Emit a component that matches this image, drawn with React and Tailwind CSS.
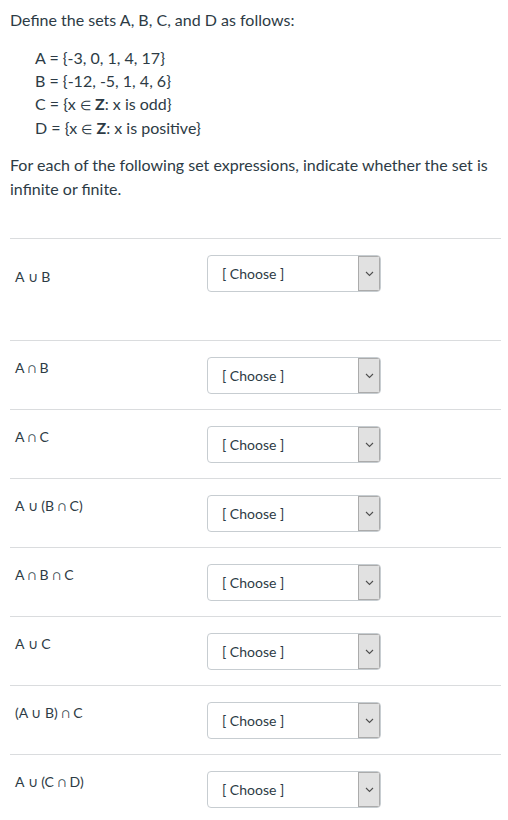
export default function App() {
  const rows = [
    "A ∪ B",
    "A ∩ B",
    "A ∩ C",
    "A ∪ (B ∩ C)",
    "A ∩ B ∩ C",
    "A ∪ C",
    "(A ∪ B) ∩ C",
    "A ∪ (C ∩ D)",
  ];

  return (
    <div className="min-h-screen bg-white pl-[10px] pt-[8px] font-['Lato',sans-serif] text-[#2d3b45]">
      {/* Question text */}
      <p className="text-base leading-[23.5px]">Define the sets A, B, C, and D as follows:</p>
      <div className="mt-[14px] pl-[25px] text-base leading-[23.4px]">
        <div>A = {"{"}-3, 0, 1, 4, 17{"}"}</div>
        <div>B = {"{"}-12, -5, 1, 4, 6{"}"}</div>
        <div className="h-[23.4px]">
          C = {"{"}x <span className="text-[13px] leading-none">∈</span> <b>Z</b>: x is odd{"}"}
        </div>
        <div className="h-[23.4px]">
          D = {"{"}x <span className="text-[13px] leading-none">∈</span> <b>Z</b>: x is positive{"}"}
        </div>
      </div>
      <p className="mt-[14px] w-[490px] text-base leading-[23.5px]">
        For each of the following set expressions, indicate whether the set is infinite or finite.
      </p>

      {/* Answer rows */}
      <div className="mt-[38px] w-[491px]">
        {rows.map((label, i) => (
          <div
            key={label}
            className={
              i === 0
                ? "flex border-t border-[#dadcde] pt-4 pb-[48px]"
                : "flex border-t border-[#dadcde] pt-4 pb-[15px]"
            }
          >
            <div
              className={
                i === 0
                  ? "w-[197px] pl-[5px] pt-[12px] text-sm leading-5"
                  : "w-[197px] pl-[5px] pt-[1px] text-sm leading-5"
              }
            >
              {label}
            </div>
            <div className="flex h-[37px] w-[174px] items-stretch overflow-hidden rounded-[4px] border border-[#c7cdd1] bg-white">
              <div className="flex flex-1 items-center pl-[14px] text-sm">[ Choose ]</div>
              <div className="flex w-[22px] items-center justify-center border border-[#ababab] bg-[#e1e1e1]">
                <svg width="9" height="6" viewBox="0 0 9 6" fill="none">
                  <path d="M1 1l3.5 3.5L8 1" stroke="#505050" strokeWidth="1.1" />
                </svg>
              </div>
            </div>
          </div>
        ))}
      </div>
    </div>
  );
}
